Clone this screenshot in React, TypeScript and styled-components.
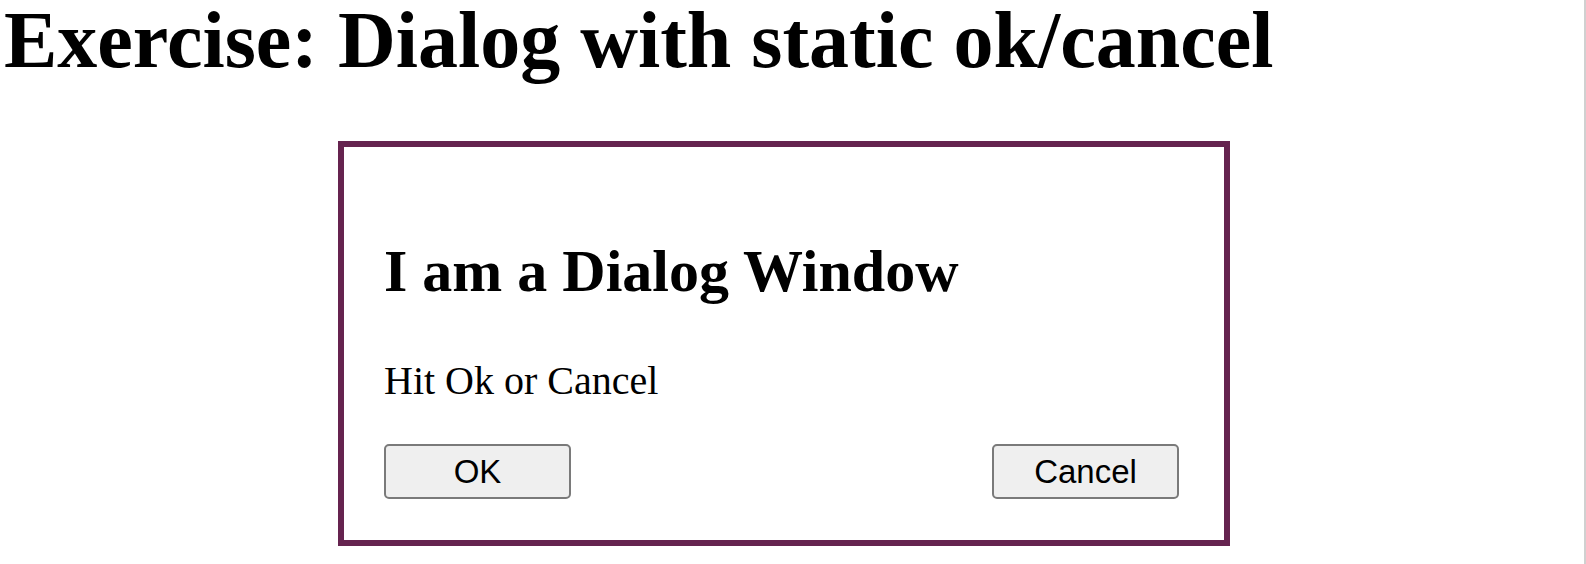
import styled, { createGlobalStyle } from "styled-components";

const GlobalStyle = createGlobalStyle`
  html, body {
    margin: 0;
    background: #fff;
    color: #000;
  }
  body {
    font-family: "Liberation Serif", "Times New Roman", serif;
    border-right: 2px solid #d0d0d0;
    min-height: 564px;
    box-sizing: border-box;
  }
`;

const Page = styled.div`
  padding: 0 0 0 4px;
`;

const Title = styled.h1`
  margin: 0;
  font-size: 80px;
  line-height: 80px;
  font-weight: bold;
`;

const Dialog = styled.div`
  width: 892px;
  box-sizing: border-box;
  margin: 61px 0 0 334px;
  border: 6px solid #65234f;
  padding: 94px 45px 41px 40px;
`;

const DialogTitle = styled.h2`
  margin: 0;
  font-size: 60px;
  line-height: 60px;
  font-weight: bold;
`;

const Message = styled.p`
  margin: 60px 0 0;
  font-size: 40px;
  line-height: 40px;
`;

const Actions = styled.div`
  display: flex;
  justify-content: space-between;
  margin-top: 43px;
`;

const Button = styled.button`
  width: 187px;
  height: 55px;
  box-sizing: border-box;
  border: 2px solid #7a7a7a;
  border-radius: 5px;
  background: #efefef;
  font-family: "Liberation Sans", Arial, sans-serif;
  font-size: 33px;
  color: #000;
  padding: 0;
`;

export default function App() {
  return (
    <Page>
      <GlobalStyle />
      <Title>Exercise: Dialog with static ok/cancel</Title>
      <Dialog>
        <DialogTitle>I am a Dialog Window</DialogTitle>
        <Message>Hit Ok or Cancel</Message>
        <Actions>
          <Button>OK</Button>
          <Button>Cancel</Button>
        </Actions>
      </Dialog>
    </Page>
  );
}
